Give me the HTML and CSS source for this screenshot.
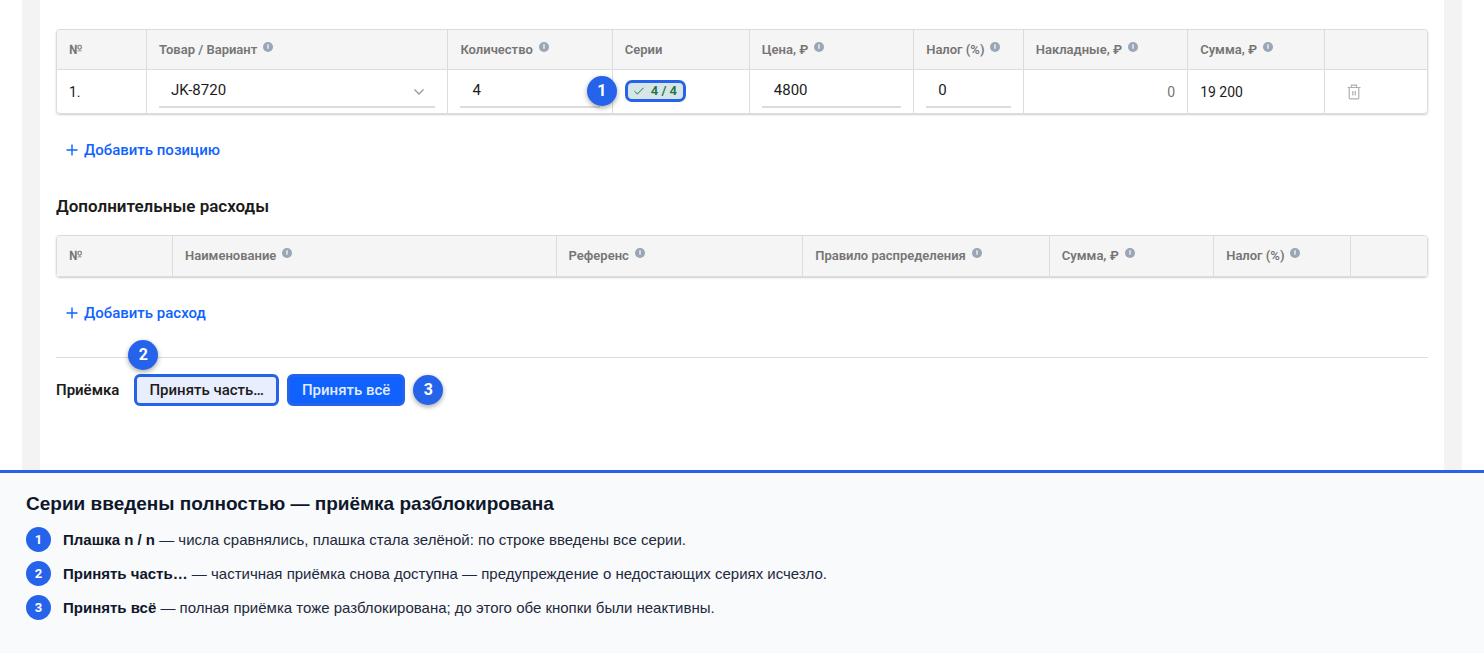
FILE: index.html
```html
<!DOCTYPE html>
<html lang="ru">
<head>
<meta charset="utf-8">
<title>Приёмка</title>
<link rel="stylesheet" href="styles.css">
</head>
<body>
<svg class="defs" aria-hidden="true">
  <symbol id="info" viewBox="0 0 10 10"><circle cx="5" cy="5" r="5" fill="#9aa5b5"/><path d="M5 2.2v4.6" stroke="#fff" stroke-width="1.2"/></symbol>
  <symbol id="plus" viewBox="0 0 12 12"><path d="M6 .5v11M.5 6h11" stroke="currentColor" stroke-width="1.4"/></symbol>
</svg>
<div class="shell">
  <main class="card">
    <table class="grid items">
      <colgroup><col class="w-num"><col class="w-22"><col class="w-12"><col class="w-10"><col class="w-12"><col class="w-8"><col class="w-12"><col class="w-10"><col></colgroup>
      <thead>
        <tr>
          <th>№</th>
          <th>Товар / Вариант<svg class="info"><use href="#info"/></svg></th>
          <th>Количество<svg class="info"><use href="#info"/></svg></th>
          <th>Серии</th>
          <th>Цена, ₽<svg class="info"><use href="#info"/></svg></th>
          <th>Налог (%)<svg class="info"><use href="#info"/></svg></th>
          <th>Накладные, ₽<svg class="info"><use href="#info"/></svg></th>
          <th>Сумма, ₽<svg class="info"><use href="#info"/></svg></th>
          <th></th>
        </tr>
      </thead>
      <tbody>
        <tr>
          <td>1.</td>
          <td>
            <div class="select">
              <select class="field" aria-label="Товар / Вариант"><option>JK-8720</option></select>
              <svg class="chevron" viewBox="0 0 10 6"><path d="M.5.5 5 5 9.500.5" fill="none" stroke="#999" stroke-width="1.3"/></svg>
            </div>
          </td>
          <td><input class="field" aria-label="Количество" value="4"></td>
          <td>
            <div class="series">
              <button class="pill" type="button"><svg class="check" viewBox="0 0 10 8"><path d="M.5 4.200 3.400 7 9.500.8" fill="none" stroke="currentColor"/></svg>4 / 4</button>
              <span class="marker marker-left">1</span>
            </div>
          </td>
          <td><input class="field" aria-label="Цена" value="4800"></td>
          <td><input class="field" aria-label="Налог" value="0"></td>
          <td class="overhead">0</td>
          <td>19 200</td>
          <td>
            <button class="trash" type="button" aria-label="Удалить"><svg viewBox="0 0 14 16"><path d="M.5 3.500h13M4.500 3.300V1.200h5v2.100M2.200 3.500v10.300q0 1 1 1h7.600q1 0 1-1V3.500M5.800 7v4.500M8.200 7v4.500" fill="none" stroke="#b0b0b0" stroke-width="1.200"/></svg></button>
          </td>
        </tr>
      </tbody>
    </table>
    <button class="add" type="button"><svg><use href="#plus"/></svg>Добавить позицию</button>

    <h2 class="section">Дополнительные расходы</h2>
    <table class="grid costs">
      <colgroup><col class="w-costnum"><col class="w-28"><col class="w-18"><col class="w-18"><col class="w-12"><col class="w-10"><col></colgroup>
      <thead>
        <tr>
          <th>№</th>
          <th>Наименование<svg class="info"><use href="#info"/></svg></th>
          <th>Референс<svg class="info"><use href="#info"/></svg></th>
          <th>Правило распределения<svg class="info"><use href="#info"/></svg></th>
          <th>Сумма, ₽<svg class="info"><use href="#info"/></svg></th>
          <th>Налог (%)<svg class="info"><use href="#info"/></svg></th>
          <th></th>
        </tr>
      </thead>
    </table>
    <button class="add" type="button"><svg><use href="#plus"/></svg>Добавить расход</button>

    <div class="receive">
      <span class="receive-label">Приёмка</span>
      <div class="spot">
        <button class="btn btn-light" type="button">Принять часть…</button>
        <span class="marker marker-corner">2</span>
      </div>
      <div class="spot">
        <button class="btn btn-primary" type="button">Принять всё</button>
        <span class="marker marker-right">3</span>
      </div>
    </div>
  </main>
</div>
<section class="legend">
  <h1>Серии введены полностью — приёмка разблокирована</h1>
  <div class="note"><span class="num">1</span><p><b>Плашка n / n</b> — числа сравнялись, плашка стала зелёной: по строке введены все серии.</p></div>
  <div class="note"><span class="num">2</span><p><b>Принять часть…</b> — частичная приёмка снова доступна — предупреждение о недостающих сериях исчезло.</p></div>
  <div class="note"><span class="num">3</span><p><b>Принять всё</b> — полная приёмка тоже разблокирована; до этого обе кнопки были неактивны.</p></div>
</section>
</body>
</html>
```
FILE: styles.css
```css
* { box-sizing: border-box; }
body {
  margin: 0;
  min-height: 100vh;
  display: flex;
  flex-direction: column;
  background: #fff;
  color: #1c1c1c;
  font: 14px/20px Roboto, "Noto Sans", sans-serif;
}
button, input, select { font: inherit; color: inherit; }
button { cursor: pointer; }
.defs { position: absolute; width: 0; height: 0; }

.shell { margin: 0 22px; padding: 0 18px; background: #f3f3f3; }
.card { padding: 29px 16px 64px; background: #fff; }

.grid {
  width: 100%;
  table-layout: fixed;
  border-collapse: separate;
  border-spacing: 0;
  border: 1px solid #dcdcdc;
  border-radius: 4px;
  box-shadow: 0 1px 2px #00000033;
}
.w-num { width: 90px; }
.w-costnum { width: 116px; }
.w-8 { width: 8%; }
.w-10 { width: 10%; }
.w-12 { width: 12%; }
.w-18 { width: 18%; }
.w-22 { width: 22%; }
.w-28 { width: 28%; }
.grid th, .grid td { padding: 0 12px; text-align: left; border-right: 1px solid #dcdcdc; }
.grid th:last-child, .grid td:last-child { border-right: 0; }
.grid th { height: 40px; background: #f5f5f5; color: #757575; font-size: 13px; font-weight: 600; white-space: nowrap; }
.items th { border-bottom: 1px solid #dcdcdc; }
.grid th:first-child { border-top-left-radius: 4px; }
.grid th:last-child { border-top-right-radius: 4px; }
.grid td { height: 43px; font-size: 14px; }
.grid .overhead { text-align: right; color: #757575; }
.info { width: 10px; height: 10px; margin-left: 6px; vertical-align: 2px; }

.field {
  display: block;
  width: 100%;
  height: 32px;
  padding: 0 12px 2px;
  border: 0;
  border-bottom: 2px solid #dcdcdc;
  border-radius: 0;
  background: transparent;
  appearance: none;
  outline: 0;
  font-size: 15px;
}
.select { position: relative; }
.chevron { position: absolute; right: 11px; top: 13px; width: 10px; height: 6px; pointer-events: none; }

.series { position: relative; display: flex; padding-bottom: 2px; }
.pill {
  display: flex;
  align-items: center;
  gap: 7px;
  height: 22px;
  padding: 0 6px;
  border: 3px solid #2563eb;
  border-radius: 7px;
  background: #d6e6e8;
  color: #217346;
  font-size: 13px;
  line-height: 16px;
  font-weight: 600;
}
.check { width: 10px; height: 8px; }
.trash { display: block; margin-left: 8px; padding: 0; border: 0; background: none; }
.trash svg { display: block; width: 16px; height: 16px; margin-left: 1px; }

.marker {
  position: absolute;
  width: 30px;
  height: 30px;
  border-radius: 50%;
  background: #2563eb;
  color: #fff;
  font-size: 16px;
  line-height: 30px;
  font-weight: 700;
  text-align: center;
  box-shadow: 0 2px 5px #00000059;
}
.marker-left { right: 100%; top: -4px; margin-right: 8px; }
.marker-corner { left: -6px; top: -34px; }
.marker-right { left: 100%; top: 1px; margin-left: 8px; }

.add {
  display: flex;
  align-items: center;
  gap: 6px;
  margin-top: 26px;
  padding: 0 10px;
  border: 0;
  background: none;
  color: #0f62fe;
  font-size: 15px;
  font-weight: 500;
}
.add svg { width: 12px; height: 12px; }
.section { margin: 34px 0 17px; font-size: 17px; line-height: 24px; font-weight: 600; }

.receive {
  display: flex;
  align-items: center;
  gap: 8px;
  margin-top: 34px;
  padding-top: 16px;
  border-top: 1px solid #dcdcdc;
}
.receive-label { margin-right: 7px; font-size: 15px; font-weight: 600; }
.spot { position: relative; }
.btn {
  height: 32px;
  padding: 0 12px;
  border: 3px solid #2563eb;
  border-radius: 6px;
  font-size: 15px;
  font-weight: 500;
}
.btn-light { background: #e8eefe; }
.btn-primary { background: #0f62fe; color: #e2ecff; }

.legend {
  flex: 1;
  padding: 19px 26px;
  border-top: 3px solid #2563eb;
  background: #f8fafc;
  color: #1e293b;
  font: 15px/24px "Liberation Sans", Arial, sans-serif;
}
.legend h1 { margin: 0 0 11px; color: #0f172a; font-size: 19px; line-height: 24px; }
.legend b { color: #0f172a; }
.note { display: flex; align-items: center; gap: 12px; margin-bottom: 9px; }
.note p { margin: 0; }
.num {
  flex: none;
  width: 25px;
  height: 25px;
  border-radius: 50%;
  background: #2563eb;
  color: #fff;
  font: 700 13px/25px Roboto, sans-serif;
  text-align: center;
}
```
